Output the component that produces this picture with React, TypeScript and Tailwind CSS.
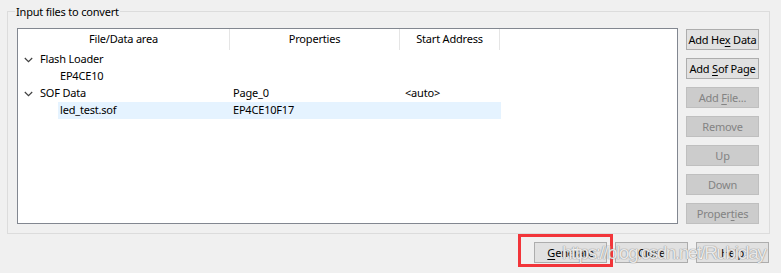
import React from "react";

// Convert Programming File – "Input files to convert" group

interface SideButton {
  label: React.ReactNode;
  enabled: boolean;
}

const u = (c: string) => <span className="underline underline-offset-2">{c}</span>;

const SIDE_BUTTONS: SideButton[] = [
  { label: <>Add He{u("x")} Data</>, enabled: true },
  { label: <>Add {u("S")}of Page</>, enabled: true },
  { label: <>Add {u("F")}ile...</>, enabled: false },
  { label: "Remove", enabled: false },
  { label: "Up", enabled: false },
  { label: "Down", enabled: false },
  { label: <>Proper{u("t")}ies</>, enabled: false },
];

interface Row {
  level: number;
  name: string;
  props?: string;
  addr?: string;
  selected?: boolean;
}

const ROWS: Row[] = [
  { level: 0, name: "Flash Loader" },
  { level: 1, name: "EP4CE10" },
  { level: 0, name: "SOF Data", props: "Page_0", addr: "<auto>" },
  { level: 1, name: "led_test.sof", props: "EP4CE10F17", selected: true },
];

function Chevron() {
  return (
    <svg width="9" height="6" viewBox="0 0 9 6" className="shrink-0">
      <path d="M0.8 1 L4.5 4.6 L8.2 1" fill="none" stroke="#404040" strokeWidth="1.2" />
    </svg>
  );
}

function WinButton({ children, enabled = true }: { children: React.ReactNode; enabled?: boolean }) {
  return (
    <div
      className={
        "w-[73px] h-[21px] flex items-center justify-center border leading-none " +
        (enabled
          ? "bg-[#e1e1e1] border-[#adadad] text-black"
          : "bg-[#cccccc] border-[#bfbfbf] text-[#838383]")
      }
    >
      <span className="whitespace-nowrap">{children}</span>
    </div>
  );
}

export default function App() {
  return (
    <div className="relative w-[781px] h-[273px] bg-[#f0f0f0] overflow-hidden font-['Noto_Sans','DejaVu_Sans',sans-serif] text-[11px] tracking-[-0.2px] text-black">
      {/* group box */}
      <div className="pt-[11px] pl-[7px]">
        <div className="w-[763px] h-[223px] border border-[#dcdcdc] flex flex-col">
          <div className="h-0 flex">
            <span className="ml-[7px] -mt-[9px] h-[17px] px-[1px] bg-[#f0f0f0] leading-[17px] whitespace-nowrap">
              Input files to convert
            </span>
          </div>
          <div className="flex pt-[16px] pl-[9px] gap-[8px]">
            {/* list */}
            <div className="w-[661px] h-[196px] border border-[#828790] bg-white flex flex-col">
              <div className="flex h-[22px]">
                <div className="w-[212px] h-[21px] border-r border-[#e5e5e5] flex items-center justify-center">File/Data area</div>
                <div className="w-[170px] h-[21px] border-r border-[#e5e5e5] flex items-center justify-center">Properties</div>
                <div className="w-[100px] h-[21px] border-r border-[#e5e5e5] flex items-center justify-center">Start Address</div>
              </div>
              {ROWS.map((r) => (
                <div key={r.name} className="flex h-[17px] items-center">
                  <div className="w-[213px] flex items-center h-full">
                    {r.level === 0 ? (
                      <div className="flex items-center h-full pl-[6px] gap-[7px]">
                        <Chevron />
                        <span>{r.name}</span>
                      </div>
                    ) : (
                      <div
                        className={
                          "ml-[40px] pl-[2px] h-full flex items-center flex-1 " +
                          (r.selected ? "bg-[#e5f3ff]" : "")
                        }
                      >
                        {r.name}
                      </div>
                    )}
                  </div>
                  <div className={"w-[170px] h-full flex items-center pl-[2px] " + (r.selected ? "bg-[#e5f3ff]" : "")}>
                    {r.props}
                  </div>
                  <div className={"w-[100px] h-full flex items-center pl-[4px] " + (r.selected ? "bg-[#e5f3ff]" : "")}>
                    {r.addr}
                  </div>
                </div>
              ))}
            </div>
            {/* side buttons */}
            <div className="flex flex-col gap-[8px] pt-[1px]">
              {SIDE_BUTTONS.map((b, i) => (
                <WinButton key={i} enabled={b.enabled}>
                  {b.label}
                </WinButton>
              ))}
            </div>
          </div>
        </div>
      </div>

      {/* bottom buttons */}
      <div className="flex justify-end gap-[8px] pr-[12px] pt-[8px]">
        <div className="relative">
          <WinButton>
            {u("G")}enerate
          </WinButton>
          <div className="absolute -left-[16px] -top-[8px] w-[95px] h-[33px] border-[3px] border-[#f2353a]" />
        </div>
        <WinButton>Close</WinButton>
        <WinButton>Help</WinButton>
      </div>

      {/* watermark */}
      <div className="absolute left-[562px] top-[242px] text-[19px] leading-[22px] tracking-[-1.5px] text-white/80 font-['Liberation_Sans',sans-serif] [text-shadow:0_0_1px_#8a8a8a,0_0_1px_#8a8a8a] whitespace-nowrap pointer-events-none">
        https://blog.csdn.net/Rubiclay
      </div>
    </div>
  );
}
